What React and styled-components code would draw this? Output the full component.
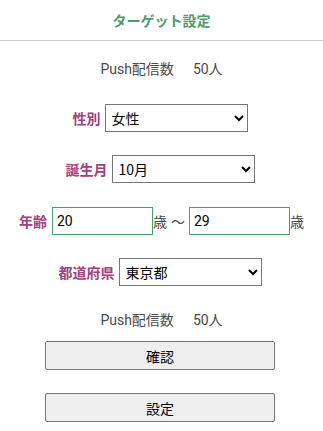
import React from "react";
import styled, { createGlobalStyle } from "styled-components";

const Global = createGlobalStyle`
  html, body { margin: 0; padding: 0; background: #fff; }
  body { font-family: "Noto Sans CJK JP", "Noto Sans", sans-serif; color: #333; }
`;

const Page = styled.div`
  width: 323px;
  display: flex;
  flex-direction: column;
  align-items: center;
`;

const Header = styled.div`
  width: 100%;
  height: 40px;
  display: flex;
  align-items: center;
  justify-content: center;
  border-bottom: 1px solid #cccccc;
`;

const Title = styled.h1`
  margin: 0;
  font-size: 14px;
  font-weight: bold;
  color: #4f9a6e;
  line-height: 20px;
`;

const Count = styled.div`
  margin-top: ${(p) => p.$mt}px;
  display: flex;
  gap: 19px;
  font-family: Roboto, "Noto Sans CJK JP", sans-serif;
  font-size: 14px;
  line-height: 20px;
  color: #4a4a4a;
`;

const Row = styled.div`
  margin-top: ${(p) => p.$mt}px;
  height: 28px;
  display: flex;
  align-items: center;
  justify-content: center;
  gap: 4px;
  margin-left: -3px;
`;

const Label = styled.label`
  font-size: 14px;
  font-weight: bold;
  color: #a0407f;
`;

const Select = styled.select`
  width: 143px;
  height: 28px;
  box-sizing: border-box;
  border: 1px solid #767676;
  border-radius: 0;
  background: #fff;
  font-family: "Noto Sans CJK JP", sans-serif;
  font-size: 14px;
  color: #000;
  padding: 0 2px;
`;

const Input = styled.input`
  width: 101px;
  height: 28px;
  box-sizing: border-box;
  border: 1px solid #4a9e6a;
  border-radius: 0;
  font-family: Roboto, "Noto Sans CJK JP", sans-serif;
  font-size: 14px;
  color: #000;
  padding: 0 4px;
  outline: none;
`;

const Unit = styled.span`
  font-size: 14px;
  color: #444;
`;

const Tilde = styled.span`
  font-size: 14px;
  color: #444;
  margin: 0 4px 0 4px;
`;

const AgeRow = styled(Row)`
  gap: 0;
  margin-left: 0;
  ${Label} { margin-right: 5px; }
`;

const Button = styled.button`
  margin-top: ${(p) => p.$mt}px;
  width: 230px;
  height: 29px;
  box-sizing: border-box;
  border: 1px solid #767676;
  border-radius: 2px;
  background: #efefef;
  font-family: "Noto Sans CJK JP", sans-serif;
  font-size: 14px;
  color: #000;
  margin-left: -3px;
`;

export default function App() {
  return (
    <>
      <Global />
      <Page>
        <Header>
          <Title>ターゲット設定</Title>
        </Header>
        <Count $mt={18}>
          <span>Push配信数</span>
          <span>50人</span>
        </Count>
        <Row $mt={25}>
          <Label>性別</Label>
          <Select defaultValue="female">
            <option value="female">女性</option>
            <option value="male">男性</option>
          </Select>
        </Row>
        <Row $mt={23}>
          <Label>誕生月</Label>
          <Select defaultValue="10">
            <option value="10">10月</option>
          </Select>
        </Row>
        <AgeRow $mt={24}>
          <Label>年齢</Label>
          <Input defaultValue="20" />
          <Unit>歳</Unit>
          <Tilde>〜</Tilde>
          <Input defaultValue="29" />
          <Unit>歳</Unit>
        </AgeRow>
        <Row $mt={23}>
          <Label>都道府県</Label>
          <Select defaultValue="tokyo">
            <option value="tokyo">東京都</option>
          </Select>
        </Row>
        <Count $mt={24}>
          <span>Push配信数</span>
          <span>50人</span>
        </Count>
        <Button $mt={11}>確認</Button>
        <Button $mt={23}>設定</Button>
      </Page>
    </>
  );
}
